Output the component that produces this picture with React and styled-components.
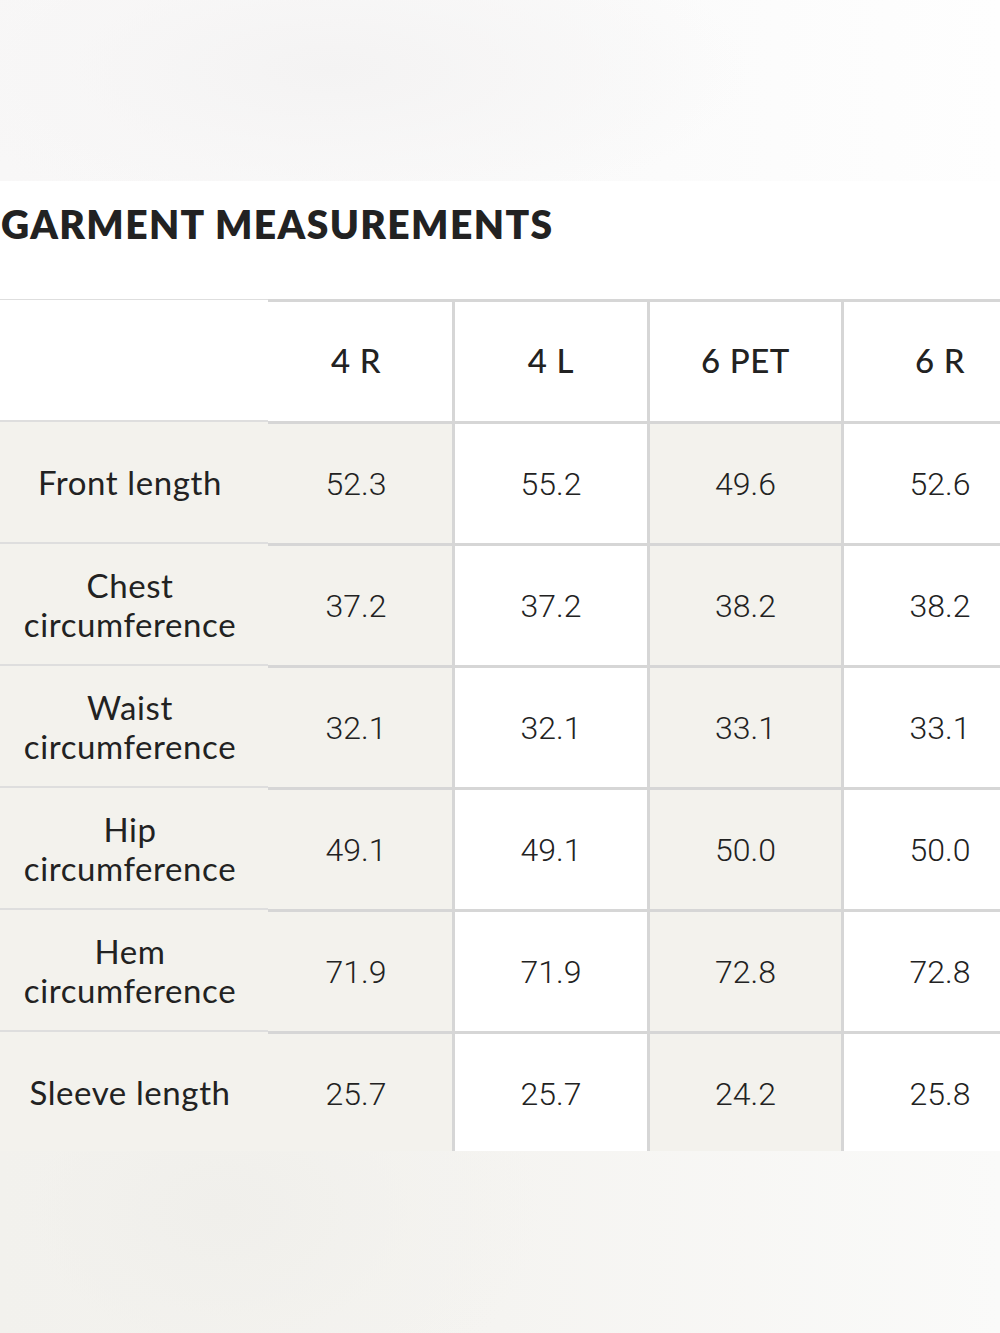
import React from 'react';
import styled, { createGlobalStyle, css } from 'styled-components';

const GlobalStyle = createGlobalStyle`
  html, body {
    margin: 0;
    padding: 0;
    background: #ffffff;
  }
  body {
    font-family: "Lato", "Liberation Sans", sans-serif;
    color: #222222;
    overflow: hidden;
  }
`;

const Page = styled.div`
  width: 1000px;
  height: 1333px;
  display: flex;
  flex-direction: column;
  overflow: hidden;
`;

const TopBand = styled.div`
  height: 181px;
  flex: none;
  background:
    radial-gradient(ellipse 420px 150px at 330px 70px, #f4f3f3 0%, rgba(246,245,245,0.6) 55%, rgba(255,255,255,0) 100%),
    linear-gradient(90deg, #f8f7f7 0%, #fafafa 55%, #fefefe 100%);
`;

const Sheet = styled.section`
  background: #ffffff;
  padding-top: 20px;
  flex: none;
`;

const Title = styled.h2`
  margin: 0 0 0 1px;
  font-family: "Lato", "Liberation Sans", sans-serif;
  font-weight: 800;
  font-size: 39px;
  line-height: 46px;
  letter-spacing: 1.4px;
  color: #222222;
`;

const Table = styled.div`
  margin-top: 52px;
  display: grid;
  grid-template-columns: 268px 184px 195px 194px 195px;
  grid-auto-rows: 122px;
  height: 852px;
  overflow: hidden;
  width: 1036px;
`;

const Cell = styled.div`
  display: flex;
  align-items: center;
  justify-content: center;
  text-align: center;
  background: ${({ $shade }) => ($shade ? '#f3f2ed' : '#ffffff')};
  border-top: 3px solid #d6d6d6;
  ${({ $divider }) => $divider && css`
    border-left: 3px solid #d6d6d6;
  `}
  ${({ $first }) => $first && css`
    padding-right: 8px;
  `}
  font-family: "Roboto", "Liberation Sans", sans-serif;
  font-weight: 300;
  font-size: 32px;
  color: #222222;
  box-sizing: border-box;
`;

const HeadCell = styled(Cell)`
  background: #ffffff;
  font-family: "Lato", "Liberation Sans", sans-serif;
  font-weight: 500;
  font-size: 33px;
  letter-spacing: 0.6px;
  padding-bottom: 4px;
`;

const LabelCell = styled(Cell)`
  border-top: 2px solid #dedede;
  padding: 0 8px 0 0;
  margin-top: -1px;
  font-family: "Lato", "Liberation Sans", sans-serif;
  font-weight: 400;
  font-size: 33px;
  line-height: 39px;
  letter-spacing: 0.6px;
  background: ${({ $head }) => ($head ? '#ffffff' : '#f3f2ed')};
`;

const BottomBand = styled.div`
  flex: 1;
  background:
    radial-gradient(ellipse 320px 220px at 220px 60px, #f0efeb 0%, rgba(242,241,237,0.5) 60%, rgba(255,255,255,0) 100%),
    linear-gradient(90deg, #f2f1ed 0%, #f5f4f1 50%, #fafaf9 100%);
`;

const sizes = ['4 R', '4 L', '6 PET', '6 R'];

const rows = [
  ['Front length', ['52.3', '55.2', '49.6', '52.6']],
  ['Chest circumference', ['37.2', '37.2', '38.2', '38.2']],
  ['Waist circumference', ['32.1', '32.1', '33.1', '33.1']],
  ['Hip circumference', ['49.1', '49.1', '50.0', '50.0']],
  ['Hem circumference', ['71.9', '71.9', '72.8', '72.8']],
  ['Sleeve length', ['25.7', '25.7', '24.2', '25.8']],
];

function LabelText({ text }) {
  const words = text.split(' ');
  if (text.endsWith('circumference')) {
    return (
      <span>
        {words[0]}
        <br />
        {words[1]}
      </span>
    );
  }
  return <span>{text}</span>;
}

export default function App() {
  return (
    <Page>
      <GlobalStyle />
      <TopBand />
      <Sheet>
        <Title>GARMENT MEASUREMENTS</Title>
        <Table>
          <LabelCell $head />
          {sizes.map((s, i) => (
            <HeadCell key={s} $divider={i > 0} $first={i === 0}>{s}</HeadCell>
          ))}
          {rows.map(([label, values]) => (
            <React.Fragment key={label}>
              <LabelCell>
                <LabelText text={label} />
              </LabelCell>
              {values.map((v, i) => (
                <Cell key={i} $shade={i % 2 === 0} $divider={i > 0} $first={i === 0}>{v}</Cell>
              ))}
            </React.Fragment>
          ))}
        </Table>
      </Sheet>
      <BottomBand />
    </Page>
  );
}
